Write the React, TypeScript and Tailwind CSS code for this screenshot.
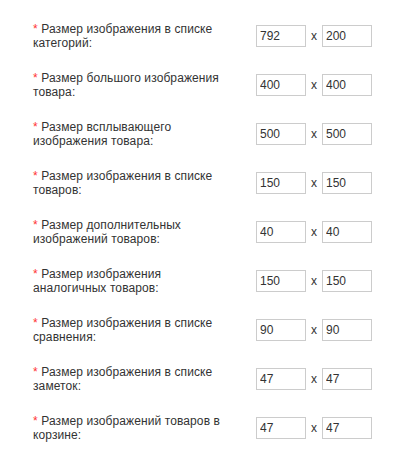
const rows = [
  { label: 'Размер изображения в списке категорий:', w: '792', h: '200' },
  { label: 'Размер большого изображения товара:', w: '400', h: '400' },
  { label: 'Размер всплывающего изображения товара:', w: '500', h: '500' },
  { label: 'Размер изображения в списке товаров:', w: '150', h: '150' },
  { label: 'Размер дополнительных изображений товаров:', w: '40', h: '40' },
  { label: 'Размер изображения аналогичных товаров:', w: '150', h: '150' },
  { label: 'Размер изображения в списке сравнения:', w: '90', h: '90' },
  { label: 'Размер изображения в списке заметок:', w: '47', h: '47' },
  { label: 'Размер изображений товаров в корзине:', w: '47', h: '47' },
];

const SizeInput = ({ value }: { value: string }) => (
  <input
    type="text"
    defaultValue={value}
    className="h-[22px] w-[50px] border border-[#ccc] bg-white px-[3px] text-[12px] text-[#333] outline-none"
  />
);

export default function App() {
  return (
    <div className="min-h-[474px] w-[420px] bg-white pt-[11px] font-['Liberation_Sans',Arial,sans-serif] text-[12px] text-[#333]">
      {rows.map((row) => (
        <div key={row.label} className="flex h-[49px] items-center pl-[33px]">
          <p className="w-[200px] leading-[14px] tracking-[0.1px]">
            <span className="text-[#f33]">*</span> {row.label}
          </p>
          <div className="ml-[23px] flex items-center">
            <SizeInput value={row.w} />
            <span className="mx-[5px] w-[6px] text-[12px]">x</span>
            <SizeInput value={row.h} />
          </div>
        </div>
      ))}
    </div>
  );
}
